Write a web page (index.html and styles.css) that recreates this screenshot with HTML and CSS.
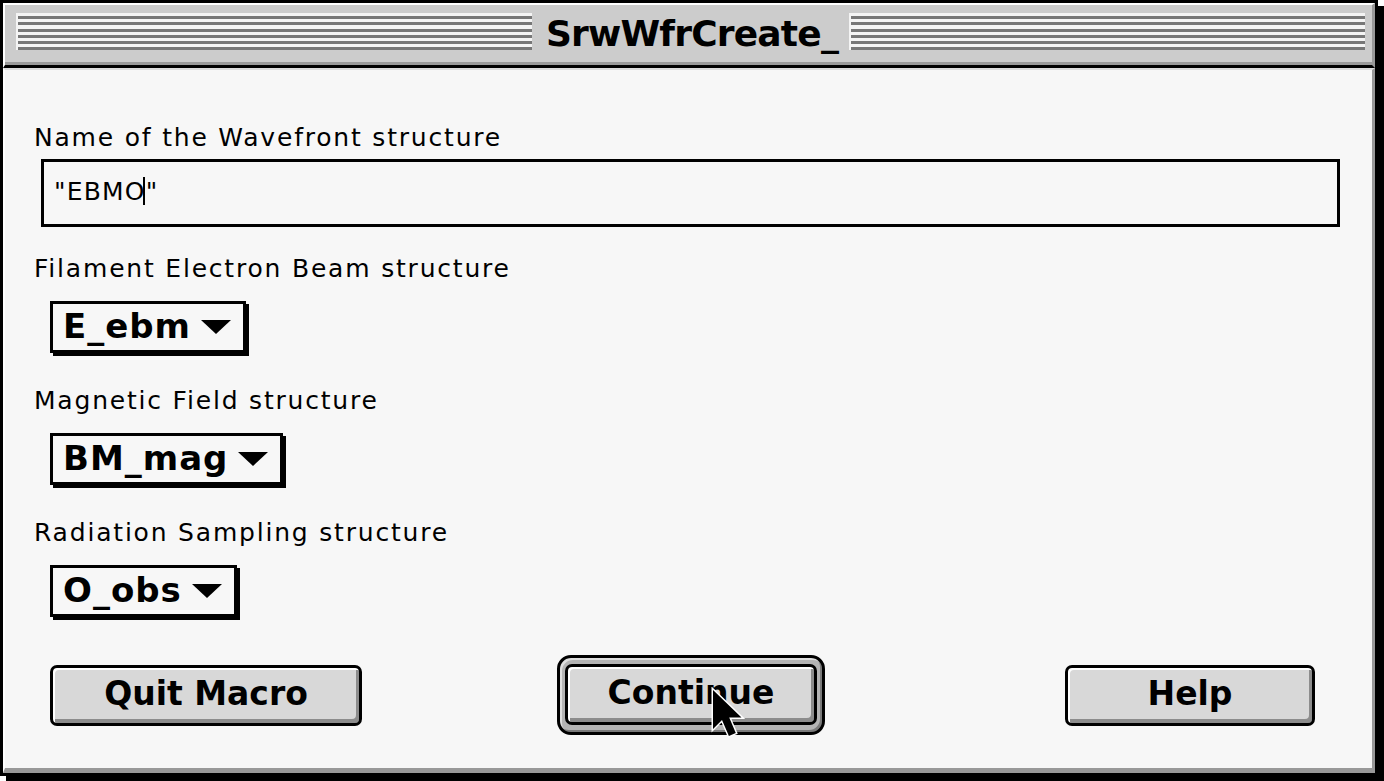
FILE: index.html
```html
<!DOCTYPE html>
<html>
<head>
<meta charset="utf-8">
<title>SrwWfrCreate_</title>
<link rel="stylesheet" href="styles.css">
</head>
<body>
<div class="window">
  <div class="titlebar">
    <div class="stripes"></div>
    <div class="title">SrwWfrCreate_</div>
    <div class="stripes"></div>
  </div>
  <div class="content">
    <div class="label first">Name of the Wavefront structure</div>
    <div class="textfield"><span class="txt">"EBMO</span><span class="caret"></span><span class="txt">"</span></div>

    <div class="label">Filament Electron Beam structure</div>
    <div class="popup"><span class="ptxt">E_ebm</span><svg class="tri" width="30" height="14" viewBox="0 0 30 14"><polygon points="0,0 30,0 15,14" fill="#000"/></svg></div>

    <div class="label">Magnetic Field structure</div>
    <div class="popup"><span class="ptxt">BM_mag</span><svg class="tri" width="30" height="14" viewBox="0 0 30 14"><polygon points="0,0 30,0 15,14" fill="#000"/></svg></div>

    <div class="label">Radiation Sampling structure</div>
    <div class="popup"><span class="ptxt">O_obs</span><svg class="tri" width="30" height="14" viewBox="0 0 30 14"><polygon points="0,0 30,0 15,14" fill="#000"/></svg></div>

    <div class="buttons">
      <div class="btn quit">Quit Macro</div>
      <div class="ring"><div class="btn cont">Continue</div></div>
      <div class="btn help">Help</div>
    </div>
  </div>
  <svg class="cursor" width="36" height="54" viewBox="0 0 12 18"><path d="M1,1 V14 L4,11 L6.3,16.3 L8.6,15.3 L6.4,10.2 H10.5 Z" fill="#000" stroke="#fff" stroke-width="1" stroke-linejoin="miter" paint-order="stroke"/></svg>
</div>
</body>
</html>
```
FILE: styles.css
```css
html, body {
  margin: 0;
  padding: 0;
  background: #ffffff;
}
body {
  width: 1384px;
  height: 781px;
  overflow: hidden;
  font-family: "DejaVu Sans", "Liberation Sans", sans-serif;
}
.window {
  position: relative;
  width: 1372px;
  height: 770px;
  border: 3px solid #000;
  box-shadow: 6px 6px 0 #000;
  background: #f7f7f7;
  display: flex;
  flex-direction: column;
}
.titlebar {
  box-sizing: border-box;
  height: 65px;
  flex: none;
  display: flex;
  align-items: flex-start;
  background: #cccccc;
  border-top: 2px solid #ffffff;
  border-left: 2px solid #ffffff;
  border-right: 3px solid #999999;
  border-bottom: 3px solid #000000;
  box-shadow: inset 0 -3px 0 #9a9a9a;
  padding: 8px 7px 0 11px;
}
.stripes {
  flex: 1;
  height: 37px;
  border-left: 2px solid #f4f4f4;
  background: repeating-linear-gradient(to bottom, #f4f4f4 0, #f4f4f4 3.2px, #777777 3.2px, #777777 6.2px);
}
.title {
  flex: none;
  height: 52px;
  margin-top: -8px;
  padding: 0 11px 0 14px;
  background: #cccccc;
  font-weight: bold;
  font-size: 36px;
  letter-spacing: -0.8px;
  line-height: 58px;
  color: #000;
}
.content {
  box-sizing: border-box;
  flex: 1;
  border-top: 2px solid #dcdcdc;
  border-left: 2px solid #ffffff;
  border-right: 3px solid #999999;
  border-bottom: 5px solid #999999;
  padding: 53px 0 0 29px;
  display: flex;
  flex-direction: column;
  align-items: flex-start;
}
.label {
  font-size: 25px;
  line-height: 30px;
  height: 30px;
  letter-spacing: 1.8px;
  color: #000;
  margin-top: 33px;
  white-space: nowrap;
}
.label.first {
  margin-top: 0;
}
.textfield {
  box-sizing: border-box;
  margin-top: 6px;
  margin-left: 7px;
  width: 1299px;
  height: 68px;
  border: 3px solid #000;
  background: #f7f7f7;
  display: flex;
  align-items: center;
  padding-left: 10px;
  padding-bottom: 4px;
  font-size: 25px;
  letter-spacing: 1.2px;
}
.textfield + .label {
  margin-top: 27px;
}
.caret {
  display: inline-block;
  width: 2px;
  height: 28px;
  background: #000;
  margin: 0 1px 0 -3px;
}
.popup {
  box-sizing: border-box;
  margin-top: 17px;
  margin-left: 16px;
  height: 52px;
  border: 3px solid #000;
  box-shadow: 3px 3px 0 #000;
  background: #f7f7f7;
  display: flex;
  align-items: center;
  padding: 0 12px 0 10px;
  gap: 10px;
}
.ptxt {
  font-weight: bold;
  font-size: 34px;
  letter-spacing: 1px;
  line-height: 40px;
  margin-top: -3px;
}
.tri {
  display: block;
  margin-top: 0;
}
.buttons {
  margin-top: 38px;
  display: flex;
  align-items: center;
}
.btn {
  box-sizing: border-box;
  height: 61px;
  border: 3px solid #000;
  border-radius: 7px;
  background: #d8d8d8;
  box-shadow: inset 2px 2px 0 #ffffff, inset -3px -4px 0 #8c8c8c;
  font-weight: bold;
  font-size: 33px;
  line-height: 52px;
  text-align: center;
  color: #000;
}
.quit {
  width: 312px;
  margin-left: 16px;
}
.ring {
  box-sizing: border-box;
  width: 268px;
  height: 80px;
  margin-left: 195px;
  border: 3px solid #000;
  border-radius: 14px;
  background: #b4b4b4;
  box-shadow: inset 2px 2px 0 #dedede, inset -2px -2px 0 #7a7a7a;
  padding: 6px 5px;
}
.cont {
  width: 252px;
}
.help {
  width: 250px;
  margin-left: 240px;
}
.cursor {
  position: absolute;
  left: 707px;
  top: 684px;
}
```
